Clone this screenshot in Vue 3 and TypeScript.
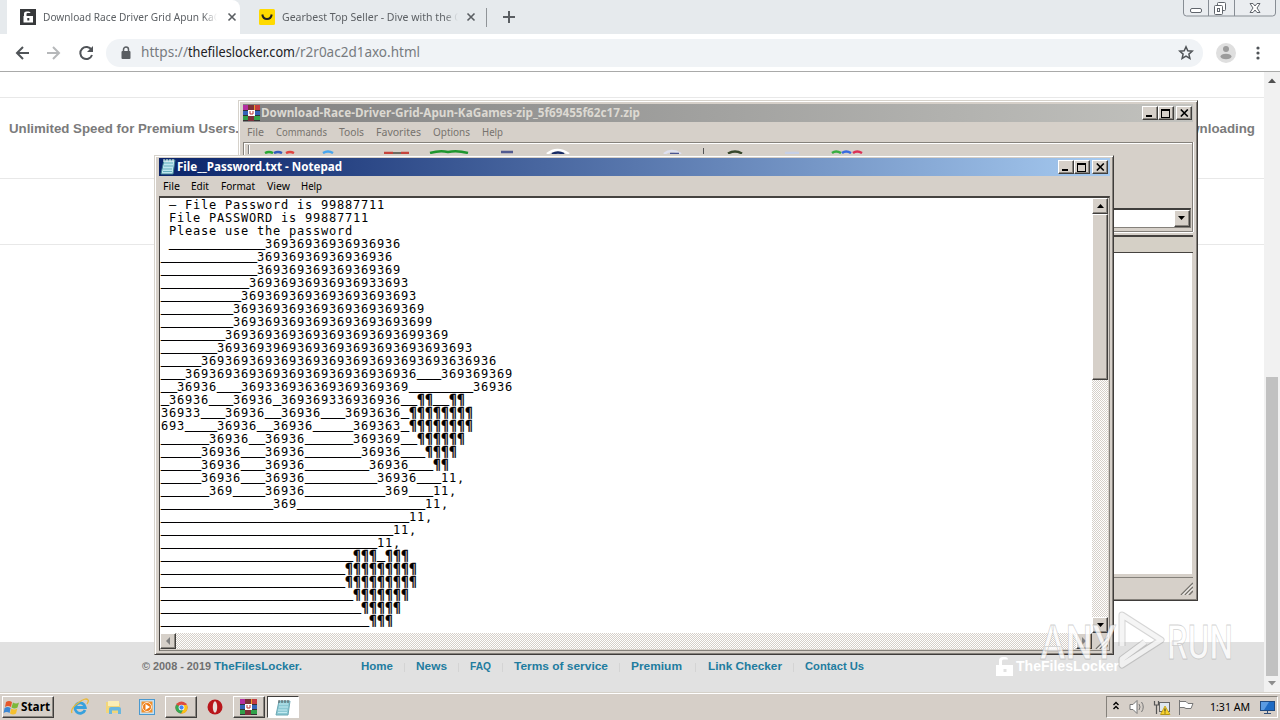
<script setup lang="ts">
import { h, type FunctionalComponent } from 'vue'

interface LabelProps { text: string; w: number; size?: number }

/* A text run stretched to a fixed advance width */
const Label: FunctionalComponent<LabelProps> = (p) => {
  const size = p.size ?? 11
  return h('svg', { width: p.w, height: 16, style: { overflow: 'visible', flex: 'none', display: 'block' } }, [
    h('text', { x: 0, y: 12, 'font-size': size, fill: 'currentColor', textLength: p.w, lengthAdjust: 'spacingAndGlyphs' }, p.text),
  ])
}
Label.props = ['text', 'w', 'size']

const u = (n: number): string => '_'.repeat(n)
const q = (n: number): string => '¶'.repeat(n)
const d = (n: number): string => '369'.repeat(n)

const rawLines: string[] = [
  ' – File Password is 99887711',
  ' File PASSWORD is 99887711',
  ' Please use the password',
  ' ' + u(12) + d(5) + '36',
  u(12) + d(5) + '36',
  u(12) + d(6),
  u(11) + d(5) + '33693',
  u(10) + d(7) + '3',
  u(9) + d(8),
  u(9) + d(7) + '3699',
  u(8) + d(7) + '3699369',
  u(7) + '36936939' + '693'.repeat(8),
  u(5) + d(10) + '3636936',
  u(3) + d(9) + '36' + u(3) + d(3),
  u(2) + '36936' + u(3) + '369336936369369369369' + u(8) + '36936',
  '_36936___36936_369369336936936__¶¶__¶¶',
  '36933___36936__36936___3693636_' + q(8),
  '693____36936__36936_____369363_' + q(8),
  u(6) + '36936__36936' + u(6) + '369369__' + q(6),
  u(5) + '36936___36936' + u(7) + '36936___' + q(4),
  u(5) + '36936___36936' + u(8) + '36936___' + q(2),
  u(5) + '36936___36936' + u(9) + '36936___11,',
  u(6) + '369____36936' + u(10) + '369___11,',
  u(14) + '369' + u(16) + '11,',
  u(31) + '11,',
  u(29) + '11,',
  u(27) + '11,',
  u(24) + q(3) + '_' + q(3),
  u(23) + q(9),
  u(23) + q(9),
  u(24) + q(7),
  u(25) + q(5),
  u(26) + q(3),
]
const lines = rawLines.map((l) => l.match(/_+|¶+|[^_¶]+/g) ?? [])
const kind = (s: string): string => (s[0] === '_' ? 'under' : s[0] === '¶' ? 'pil' : 'txt')

const rarMenu = [
  { t: 'File', w: 17, g: 12 }, { t: 'Commands', w: 51, g: 12 }, { t: 'Tools', w: 25, g: 12 },
  { t: 'Favorites', w: 45, g: 12 }, { t: 'Options', w: 37, g: 12 }, { t: 'Help', w: 21, g: 0 },
]
const padMenu = [
  { t: 'File', w: 17, g: 11 }, { t: 'Edit', w: 18, g: 12 }, { t: 'Format', w: 34, g: 12 },
  { t: 'View', w: 23, g: 11 }, { t: 'Help', w: 21, g: 0 },
]
const links = [
  { t: 'Home', w: 32, g: 23 }, { t: 'News', w: 31, g: 23 }, { t: 'FAQ', w: 21, g: 23 }, { t: 'Terms of service', w: 94, g: 23 },
  { t: 'Premium', w: 51, g: 26 }, { t: 'Link Checker', w: 74, g: 23 }, { t: 'Contact Us', w: 59, g: 0 },
]
</script>

<template>
  <div class="screen">
    <header class="tabs">
      <div class="tab active">
        <svg class="fav" width="16" height="16"><rect width="16" height="16" fill="#37393b" /><path d="M4 7V4.500q0-2 2.500-2h2q2 0 2 1.500H8.500q-2-.5-2 1V7H13v6.500H3.500V7z" fill="#fff" /><rect x="7.300" y="9" width="2" height="2.500" fill="#37393b" /></svg>
        <div class="fade f1"><Label text="Download Race Driver Grid Apun KaG" :w="178" :size="11.5" /></div>
        <svg class="x" width="10" height="10"><path d="M1.500 1.500l7 7M8.500 1.500l-7 7" stroke="#5a5e62" stroke-width="1.600" /></svg>
      </div>
      <div class="tab second">
        <svg class="fav" width="16" height="16"><rect width="16" height="16" rx="1.500" fill="#ffda00" /><path d="M3.300 5.500Q4 10 8 10t4.700-4.500" fill="none" stroke="#222" stroke-width="2" /></svg>
        <div class="fade f2"><Label text="Gearbest Top Seller - Dive with the G" :w="180" :size="11.5" /></div>
        <svg class="x" width="10" height="10"><path d="M1.500 1.500l7 7M8.500 1.500l-7 7" stroke="#5a5e62" stroke-width="1.600" /></svg>
      </div>
      <i class="tsep"></i>
      <svg class="plus" width="14" height="14"><path d="M7 1v12M1 7h12" stroke="#5a5e62" stroke-width="2" /></svg>
      <svg class="winbtns" width="94" height="18">
        <path d="M.5 0v13q0 3 3 3h86q3 0 3-3V0M25.500 0v16M51.500 0v16" fill="#eaedf0" stroke="#878d94" />
        <rect x="7.500" y="8.500" width="11" height="4" rx="1.500" fill="#fff" stroke="#60656c" />
        <rect x="34.500" y="2.500" width="8" height="8" rx="1" fill="#fff" stroke="#60656c" /><rect x="31.500" y="5.500" width="8" height="9" rx="1" fill="#fff" stroke="#60656c" /><rect x="34.500" y="8.500" width="2" height="3" fill="none" stroke="#60656c" />
        <path d="M67 3.500h3l2 2.500 2-2.500h3L74 8l3 4.500h-3L72 10l-2 2.500h-3L70 8z" fill="#fff" stroke="#60656c" />
      </svg>
    </header>

    <div class="toolbar">
      <svg class="nav" width="100" height="36">
        <g fill="none" stroke-width="2"><path d="M29 18H17M23 12l-6 6 6 6" stroke="#505458" /><path d="M47 18h12M53 12l6 6-6 6" stroke="#b6b8ba" /><path d="M91.500 15A6 6 0 1 0 92 20" stroke="#505458" /></g><path d="M93 11v6h-6z" fill="#505458" />
      </svg>
      <div class="omni">
        <svg width="10" height="13"><rect x="0.500" y="5" width="9" height="8" rx="1" fill="#5a5e62" /><path d="M2.500 6V3.500a2.500 2.500 0 0 1 5 0V6" fill="none" stroke="#5a5e62" stroke-width="1.500" /></svg>
        <div class="url"><Label text="https://" :w="47" :size="14" /><Label class="host" text="thefileslocker.com" :w="107" :size="14" /><Label text="/r2r0ac2d1axo.html" :w="125" :size="14" /></div>
        <svg class="star" width="16" height="16"><path d="M8 1.800l1.800 4 4.400.4-3.300 2.900 1 4.400L8 11.200l-3.900 2.300 1-4.400-3.300-2.900 4.400-.4z" fill="none" stroke="#505458" stroke-width="1.500" /></svg>
      </div>
      <svg class="user" width="20" height="20"><circle cx="10" cy="10" r="10" fill="#dfdfdf" /><circle cx="10" cy="6" r="3" fill="#9c9c9c" /><ellipse cx="10" cy="13.500" rx="5.500" ry="2.800" fill="#9c9c9c" /></svg>
      <svg class="dots" width="4" height="14" fill="#505458"><circle cx="2" cy="2" r="1.600" /><circle cx="2" cy="7" r="1.600" /><circle cx="2" cy="12" r="1.600" /></svg>
    </div>

    <main class="page">
      <div class="content">
        <div class="r1"></div>
        <div class="r2"><Label text="Unlimited Speed for Premium Users." :w="230" :size="12.5" /><Label text="downloading" :w="82" :size="12.5" /></div>
        <div class="r3"></div>
        <div class="r4"></div>
        <footer>
          <Label class="copy" text="© 2008 - 2019" :w="69" /><Label class="brand" text="TheFilesLocker." :w="88" />
          <nav>
            <template v-for="(l, i) in links" :key="l.t"><Label :text="l.t" :w="l.w" /><i v-if="i < links.length - 1" :style="{ width: l.g + 'px' }"></i></template>
          </nav>
          <div class="flogo">
            <svg width="19" height="21"><path d="M1 9h3V4.500Q4 1 8 1h2q3 0 3 2.500H8.500Q7 3.500 7 5v4h11v11H1z" fill="#fff" /><rect x="8.500" y="13" width="3" height="3" fill="#e1e1e1" /></svg>
            <Label text="TheFilesLocker" :w="103" :size="14" />
          </div>
        </footer>
      </div>
      <div class="cscroll">
        <svg width="16" height="16"><path d="M4 11h8L8 6.500z" fill="#505050" /></svg>
        <div class="cthumb"></div>
        <svg width="16" height="16"><path d="M4 5h8L8 9.500z" fill="#8d8d8d" /></svg>
      </div>
    </main>

    <section class="win rar">
      <div class="title">
        <svg class="books" width="18" height="18"><rect y="1" width="6" height="6" fill="#b32fa0" /><rect x="6" y="1" width="6" height="6" fill="#e8a02c" /><rect x="12" y="1" width="5" height="6" fill="#c43a40" /><rect y="7" width="17" height="5" fill="#3463b8" /><rect y="12" width="17" height="5" fill="#32a24a" /><path d="M0 6.500h17M0 11.500h17M0 16.500h17" stroke="#333" /><rect x="5" y="1" width="6" height="16" fill="#7d3039" /><rect x="5" y="6" width="7" height="6" fill="#fff" /><path d="M7 7v3h3V7" fill="none" stroke="#b33" /></svg>
        <Label text="Download-Race-Driver-Grid-Apun-KaGames-zip_5f69455f62c17.zip" :w="379" :size="11.500" />
        <div class="ctl"><b><i class="min"></i></b><b><i class="max"></i></b><b class="c"><svg width="9" height="8"><path d="M.8.500l7 7M7.800.500l-7 7" stroke="#000" stroke-width="1.600" /></svg></b></div>
      </div>
      <div class="menu">
        <Label v-for="m in rarMenu" :key="m.t" :text="m.t" :w="m.w" :style="{ marginRight: m.g + 'px' }" />
      </div>
      <div class="rtools">
        <svg width="640" height="11">
          <path d="M4.500 2v9" stroke="#808080" /><path d="M5.500 2v9" stroke="#fff" />
          <g fill="none" stroke-width="2.500"><path d="M21 10q4-2 8 0" stroke="#28a833" /><path d="M30 10q4-2 8 0" stroke="#315dbd" /><path d="M42 10q4-2 8 0" stroke="#e04540" /><path d="M79 10q5-3 10 0" stroke="#46a5ef" /><path d="M140 10h9M157 10h8" stroke="#c5443c" /><path d="M149 10h8" stroke="#4b4a3c" stroke-width="1.500" /><path d="M186 10q10-3 18-1 9-2 20 1" stroke="#1e962e" /><path d="M257 9h12" stroke="#525b90" /><path d="M303 11q10-8 22 0" stroke="#fff" /><path d="M308 11q6-3 12 0" stroke="#172b65" /><path d="M420 11q7-6 17 0" stroke="#dfe1f0" /><path d="M426 10.500h9" stroke="#4b5690" stroke-width="1.500" /><path d="M484 10.500q7-4 14 0" stroke="#37472b" /><path d="M541 10h14" stroke="#c7d0e6" /><path d="M588 10q4-3 9 0" stroke="#38ae40" /><path d="M598 10q4-3 9 0" stroke="#376be0" /><path d="M609 10q4-3 9 0" stroke="#dc3055" /></g>
          <path d="M459.500 5v6" stroke="#555" />
        </svg>
        <div class="combo"><b><svg width="8" height="5"><path d="M0 0h7L3.500 4z" /></svg></b></div>
      </div>
      <div class="rhead"></div>
      <div class="rlist"></div>
      <div class="rstat"><svg width="13" height="13"><path d="M1 13L13 1M5 13l8-8M9 13l4-4" stroke="#77746e" stroke-width="1.500" /><path d="M2.500 13L13 2.500M6.500 13L13 6.500" stroke="#fff" /></svg></div>
    </section>

    <section class="win pad">
      <div class="title">
        <svg class="note" width="17" height="18"><path d="M4 2h11l-2 14H1z" fill="#bfe6ee" stroke="#3f8494" /><path d="M4 5h9M4 8h9M3 11h9M3 13.500h9" stroke="#65afbd" /><path d="M4 1v3M7 1v3M10 1v3M13 1v3" stroke="#eee" /></svg>
        <Label text="File__Password.txt - Notepad" :w="165" :size="11.500" />
        <div class="ctl"><b><i class="min"></i></b><b><i class="max"></i></b><b class="c"><svg width="9" height="8"><path d="M.8.500l7 7M7.800.500l-7 7" stroke="#000" stroke-width="1.600" /></svg></b></div>
      </div>
      <div class="menu">
        <Label v-for="m in padMenu" :key="m.t" :text="m.t" :w="m.w" :style="{ marginRight: m.g + 'px' }" />
      </div>
      <div class="edit">
        <div class="doc"><div v-for="(l, i) in lines" :key="i" class="ln"><span v-for="(s, j) in l" :key="j" :class="kind(s)">{{ s }}</span></div></div>
        <div class="vs">
          <b><svg width="7" height="4"><path d="M0 4h7L3.500 0z" /></svg></b>
          <b class="vthumb"></b>
          <i></i>
          <b><svg width="7" height="4"><path d="M0 0h7L3.500 4z" /></svg></b>
        </div>
        <div class="hs">
          <b><svg width="5" height="8"><path d="M4 0v8L0 4z" fill="#808080" /></svg></b>
          <i></i>
          <b><svg width="5" height="8"><path d="M0 0v8l4-4z" fill="#808080" /></svg></b>
        </div>
        <div class="grip"><svg width="13" height="13"><path d="M1 13L13 1M5 13l8-8M9 13l4-4" stroke="#77746e" stroke-width="1.500" /><path d="M2.500 13L13 2.500M6.500 13L13 6.500" stroke="#fff" /></svg></div>
      </div>
    </section>

    <svg class="wm" width="206" height="72">
      <g fill="#fff" fill-opacity=".78" stroke="#8c8c8c" stroke-opacity=".4" stroke-width=".8" font-family="Roboto, sans-serif" font-weight="500" font-size="49">
        <text x="8" y="51" textLength="76" lengthAdjust="spacingAndGlyphs">ANY</text>
        <text x="135" y="51" textLength="66" lengthAdjust="spacingAndGlyphs">RUN</text>
      </g>
      <path d="M90 38V7l39 25-39 25V51l23-17" fill="none" stroke="#888" stroke-opacity=".35" stroke-width="7" stroke-linejoin="round" />
      <path d="M90 38V7l39 25-39 25V51l23-17" fill="none" stroke="#fff" stroke-opacity=".75" stroke-width="5" stroke-linejoin="round" />
    </svg>

    <div class="taskbar">
      <div class="btn start">
        <svg width="18" height="16"><path d="M3 3q3-2 6 0L8 8Q5 6 2 8z" fill="#e5582b" /><path d="M10 3.500q3 2 6 0L14.500 8.500q-3 2-6 0z" fill="#7cb83a" /><path d="M1.600 9q3-2 6 0l-1 5q-3-2-6 0z" fill="#3c87d3" /><path d="M8.300 9.500q3 2 6 0l-1.300 5q-3 2-6 0z" fill="#f5c02e" /></svg>
        <Label text="Start" :w="29" :size="12" />
      </div>
      <svg class="ie" width="18" height="18"><path d="M14 12A5.200 5.200 0 1 1 14.300 9.500H5" fill="none" stroke="#38a1dd" stroke-width="2.800" /><path d="M1 15Q-1 11 7 5t10-3q1 1-1 4" fill="none" stroke="#e9b93a" stroke-width="1.300" /></svg>
      <svg class="folder" width="18" height="18"><path d="M1 4h6l1 1.500h7V15H1z" fill="#f2d67a" /><path d="M3 3h11v5H3z" fill="#fbeeb5" /><path d="M4 16v-5q0-2 2-2h8q2 0 2 2v5h-3v-3.500H7V16z" fill="#69b7df" /></svg>
      <svg class="wmp" width="16" height="16"><rect x=".5" y=".5" width="15" height="15" fill="#c2dff3" stroke="#4b99cf" /><rect x="2.500" y="2.500" width="11" height="11" fill="#f3912a" /><circle cx="8" cy="8" r="4.500" fill="#ee7b16" stroke="#fff" stroke-width=".8" /><path d="M6.500 5l4.500 3-4.500 3z" fill="#fff" /></svg>
      <div class="btn app chrome"><svg width="13" height="13" viewBox="0 0 15 15"><circle cx="7.500" cy="7.500" r="7" fill="#dd4b3e" /><path d="M7.500 7.500L1.400 4A7 7 0 0 0 7 14.500l3.500-5z" fill="#36a852" /><path d="M7.500 4.500h6.300A7 7 0 0 1 7 14.500l3.500-6z" fill="#fbc116" /><circle cx="7.500" cy="7.500" r="3.300" fill="#fff" /><circle cx="7.500" cy="7.500" r="2.500" fill="#4285f4" /></svg></div>
      <svg class="opera" width="16" height="16"><ellipse cx="8" cy="8" rx="7.500" ry="7.500" fill="#b9161b" /><ellipse cx="8" cy="8" rx="2.200" ry="5.800" fill="#e9e0dc" /></svg>
      <div class="btn app rarbtn"><svg width="18" height="17"><rect width="6" height="6" fill="#b32fa0" /><rect x="6" width="6" height="6" fill="#e8a02c" /><rect x="12" width="5" height="6" fill="#c43a40" /><rect y="6" width="17" height="5" fill="#3463b8" /><rect y="11" width="17" height="5" fill="#32a24a" /><path d="M0 5.500h17M0 10.500h17M0 15.500h17" stroke="#333" /><rect x="5" width="6" height="16" fill="#7d3039" /><rect x="5" y="5" width="7" height="6" fill="#fff" /><path d="M7 6v3h3V6" fill="none" stroke="#b33" /></svg></div>
      <div class="btn app on"><svg width="17" height="17"><path d="M4 2h11l-2 14H1z" fill="#8cc9d4" stroke="#6ba8b4" /><path d="M4 5h9M4 8h9M3 11h9M3 13.500h9" stroke="#c3eaf0" /><path d="M4 1v3M7 1v3M10 1v3M13 1v3" stroke="#555" /></svg></div>
      <div class="tray">
        <svg width="88" height="20">
          <path d="M5.500 8l2.500-2.500L10.500 8M5.500 12l2.500-2.500 2.500 2.500" fill="none" stroke="#000" stroke-width="1.400" />
          <path d="M22 7.500h3l4-4v13l-4-4h-3z" fill="#fff" stroke="#777" /><path d="M31 7q2 3 0 6M33.500 5q3.500 5 0 10" fill="none" stroke="#777" />
          <rect x="51.500" y="5.500" width="10" height="9" fill="#dfe7ee" stroke="#666" /><path d="M46.500 4v4h4V4M48.500 8v9M53 17.500h8" fill="none" stroke="#555" stroke-width="1.200" /><path d="M57 9l5 8.500H52.500z" fill="#f8d22c" stroke="#b99500" stroke-width=".7" /><path d="M57 11.500v3M57 15.500v1" stroke="#222" />
          <path d="M71.500 3v15M72 4.500h6l2 2h5l-2 5h-5l-2-1h-4" fill="#fff" stroke="#777" />
        </svg>
        <Label class="clock" text="1:31 AM" :w="40" :size="11.500" />
        <svg class="mon" width="15" height="13"><rect x=".5" y=".5" width="14" height="9" fill="#1e6bc4" stroke="#204a80" /><path d="M1 1h8L4 9H1z" fill="#5a9be2" /><path d="M7.500 10v2M4 12.500h7" stroke="#334f77" /></svg>
      </div>
    </div>
  </div>
</template>

<style>
body { margin: 0; overflow: hidden; }
</style>

<style scoped>
.screen { position: relative; width: 1280px; height: 720px; overflow: hidden; display: flex; flex-direction: column; background: #fff; font-family: "Noto Sans", "Open Sans", sans-serif; font-size: 11px; color: #000; }
svg { display: block; flex: none; }
.screen * { box-sizing: border-box; }
b, i { font-weight: normal; font-style: normal; }

.tabs { display: flex; height: 34px; background: #e6eaed; align-items: center; color: #5c6064; flex: none; }
.tab { display: flex; align-items: center; height: 34px; flex: none; }
.tab.active { width: 233px; margin-left: 7px; padding-left: 13px; background: #fff; border-radius: 0 8px 0 0; }
.tab.second { width: 246px; padding-left: 19px; }
.fade { overflow: hidden; height: 16px; -webkit-mask-image: linear-gradient(90deg, #000 92%, transparent); mask-image: linear-gradient(90deg, #000 92%, transparent); }
.f1 { width: 174px; margin-left: 7px; }
.f2 { width: 176px; margin-left: 7px; }
.f1 + .x { margin-left: 10px; }
.f2 + .x { margin-left: 8px; }
.tsep { width: 1px; height: 19px; background: #909498; margin-left: 0; }
.plus { margin-left: 15px; }
.winbtns { margin-left: auto; margin-right: 3px; align-self: flex-start; }

.toolbar { display: flex; align-items: center; height: 38px; flex: none; border-bottom: 1px solid #a9aaa9; background: #fff; }
.nav { margin-right: 6px; }
.omni { display: flex; align-items: center; width: 1097px; height: 28px; border-radius: 14px; background: #f0f3f6; padding-left: 15px; }
.url { display: flex; margin-left: 10px; color: #777b7f; }
.host { color: #202124; }
.star { margin-left: auto; margin-right: 9px; }
.user { margin-left: 13px; }
.dots { margin-left: 20px; }

.page { display: flex; height: 620px; flex: none; }
.content { width: 1264px; display: flex; flex-direction: column; }
.r1 { height: 26px; border-bottom: 1px solid #e8e8e8; flex: none; }
.r2 { height: 81px; border-bottom: 1px solid #e8e8e8; display: flex; justify-content: space-between; padding: 23px 9px 0 9px; font-family: "Liberation Sans", sans-serif; font-weight: bold; color: #7b7b7b; flex: none; }
.r3 { height: 66px; border-bottom: 1px solid #e8e8e8; flex: none; }
.r4 { flex: 1; }
footer { height: 50px; background: #e1e1e1; display: flex; padding: 16px 0 0 142px; font-family: "Liberation Sans", sans-serif; font-weight: bold; flex: none; color: #217c9f; }
.copy { color: #707070; }
.brand { margin-left: 3px; }
nav { display: flex; margin-left: 59px; width: 505px; }
nav i { background: linear-gradient(#d4d4d4, #d4d4d4) 50% 5px / 1px 9px no-repeat; height: 16px; flex: none; }
.flogo { display: flex; margin-left: 129px; margin-top: -2px; color: #fff; gap: 2px; align-items: center; height: 21px; }
.cscroll { width: 16px; background: #f1f1f1; display: flex; flex-direction: column; justify-content: space-between; }
.cthumb { margin: 289px 2px 0; height: 299px; background: #c1c1c1; }

.win { position: absolute; background: #d6d0c9; border: 1px solid; border-color: #d6d2cb #3f3c3a #3f3c3a #d6d2cb; box-shadow: inset 1px 1px #fff, inset -1px -1px #86827c; display: flex; flex-direction: column; }
.title { height: 18px; display: flex; align-items: center; color: #fff; font-weight: bold; flex: none; }
.menu { display: flex; align-items: center; flex: none; }
.ctl { display: flex; margin-left: auto; margin-right: 2px; }
.ctl b, .vs b, .hs b, .combo b { background: #d6d0c9; border: 1px solid; border-color: #fff #403e3c #403e3c #fff; box-shadow: inset -1px -1px #8a8680; display: flex; align-items: center; justify-content: center; flex: none; }
.ctl b { width: 16px; height: 14px; }
.ctl .c { margin-left: 2px; }
.min { width: 6px; height: 2px; background: #000; margin: 6px 2px 0 0; }
.max { width: 9px; height: 9px; border: 1px solid #000; border-top-width: 2px; margin-right: 1px; }

.rar { left: 238px; top: 100px; width: 960px; height: 501px; padding: 3px 4px 3px 4px; }
.rar .title { color: #dcd9d2; background: linear-gradient(90deg, #828282, #c2c2be); }
.rar .ctl { margin-right: 1px; }
.rar .menu { height: 20px; padding: 0 0 1px 4px; color: #77736e; }
.rtools { height: 90px; border: 1px solid #85817b; box-shadow: inset 1px 1px #fff, 0 1px #fff, 1px 0 #fff; display: flex; flex-direction: column; justify-content: space-between; align-items: flex-end; padding-bottom: 3px; padding-right: 1px; flex: none; }
.rtools > svg { align-self: flex-start; }
.combo { width: 400px; height: 20px; background: #fff; border: 1px solid #85817b; border-top: 2px solid #403e3c; padding: 0; display: flex; justify-content: flex-end; }
.combo b { width: 16px; height: 17px; }
.rhead { height: 18px; margin-top: 3px; border-top: 2px solid #45423f; border-bottom: 1px solid #45423f; background: #d5d0c6; flex: none; }
.rlist { flex: 1; background: #fff; border-bottom: 1px solid #d6d0c9; border-right: 1px solid #d6d0c9; }
.rstat { height: 20px; margin-top: 2px; border-top: 1px solid #85817b; display: flex; justify-content: flex-end; align-items: flex-end; padding-bottom: 2px; flex: none; }

.pad { left: 154px; top: 155px; width: 960px; height: 500px; padding: 2px 3px 3px 4px; }
.pad .title { background: linear-gradient(90deg, #0a246a, #a6caf0); }
.pad .menu { height: 20px; padding-left: 4px; }
.title .books { margin-left: 0; }
.title .note { margin: 0 0 0 1px; }
.edit { flex: 1; display: grid; grid-template-columns: 932px 16px; grid-template-rows: 435px 16px; border: 1px solid #85817b; border-top: 2px solid #45423f; border-left: 1px solid #45423f; background: #d6d0c9; overflow: hidden; }
.doc { background: #fff; overflow: hidden; padding-left: 1px; font: 13.29px/13px "DejaVu Sans Mono", monospace; }
.ln { height: 13px; white-space: pre; display: flex; }
.ln span { display: block; height: 13px; flex: none; }
.txt { font-size: 12px; letter-spacing: .776px; transform: translateY(1px); }
.under { transform: translateY(-2px); -webkit-text-stroke: .35px #000; }
.pil { -webkit-text-stroke: .3px #000; }
.vs { display: flex; flex-direction: column; }
.vs b { height: 16px; width: 16px; }
.vs .vthumb { height: 166px; }
.vs i, .hs i { flex: 1; background: conic-gradient(#fff 25%, #d6d0c9 0 50%, #fff 0 75%, #d6d0c9 0) 0 0 / 2px 2px; }
.hs { display: flex; }
.hs b { width: 16px; height: 16px; }
.grip { display: flex; align-items: flex-end; justify-content: flex-end; }
.wm { position: absolute; left: 1032px; top: 608px; }

.taskbar { height: 28px; flex: none; background: #d6cfc8; box-shadow: inset 0 1px #d5d1c9, inset 0 2px #fff; display: flex; align-items: center; padding: 2px 2px 0; }
.btn { height: 22px; border: 1px solid; border-color: #fff #403e3c #403e3c #fff; box-shadow: inset -1px -1px #8a8680; display: flex; align-items: center; flex: none; }
.start { width: 52px; font-weight: bold; padding-left: 0; }
.ie { margin-left: 17px; }
.folder { margin-left: 16px; }
.wmp { margin-left: 16px; }
.app { width: 32px; justify-content: center; }
.chrome { margin-left: 10px; }
.opera { margin: 0 10px; }
.on { margin-left: 2px; background: #fff; border-color: #403e3c #fff #fff #403e3c; box-shadow: none; }
.tray { margin-left: auto; width: 172px; height: 22px; border: 1px solid; border-color: #85817b #fff #fff #85817b; display: flex; align-items: center; padding-left: 1px; }
.clock { margin-left: 14px; }
.mon { margin-left: 10px; }
</style>
